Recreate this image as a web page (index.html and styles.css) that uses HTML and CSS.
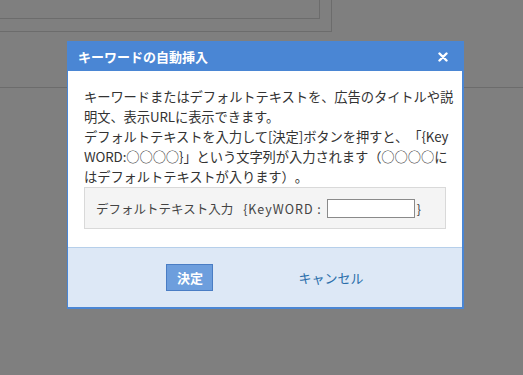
FILE: index.html
```html
<!DOCTYPE html>
<html lang="ja">
<head>
    <meta charset="UTF-8">
    <title>キーワードの自動挿入</title>
    <link rel="stylesheet" href="styles.css">
</head>
<body>
    <div class="page">
        <div class="panel">
            <div class="panel-inner"></div>
        </div>
        <div class="rule"></div>
    </div>

    <!-- モーダル -->
    <div class="dialog">
        <div class="dialog-head">
            <span class="dialog-title">キーワードの自動挿入</span>
            <svg class="dialog-close" width="10" height="10" viewBox="0 0 10 10">
                <path d="M1.5 1.5 L8.5 8.5 M8.5 1.5 L1.5 8.5" stroke="#fff" stroke-width="2.4" stroke-linecap="round"/>
            </svg>
        </div>
        <div class="dialog-body">
            <p class="dialog-text">キーワードまたはデフォルトテキストを、広告のタイトルや説<br>明文、表示URLに表示できます。<br>デフォルトテキストを入力して[決定]ボタンを押すと、「{Key<br>WORD:○○○○}」という文字列が入力されます（○○○○に<br>はデフォルトテキストが入ります）。</p>
            <div class="keyword-box">
                <span class="keyword-label">デフォルトテキスト入力</span>
                <span class="keyword-open">{KeyWORD :</span>
                <input type="text" class="keyword-input">
                <span class="keyword-close">}</span>
            </div>
        </div>
        <div class="dialog-foot">
            <a href="#" class="btn-ok">決定</a>
            <a href="#" class="btn-cancel">キャンセル</a>
        </div>
    </div>
</body>
</html>
```

FILE: styles.css
```css
* {
    margin: 0;
    padding: 0;
    box-sizing: border-box;
}

:root {
    --blue: #4a86d4;
    --overlay: #7f7f7f;
    --line: #6c6c6c;
    --text: #333333;
}

body {
    background: var(--overlay);
    font-family: "Noto Sans CJK JP", "Liberation Sans", sans-serif;
    color: var(--text);
    width: 523px;
    height: 375px;
    overflow: hidden;
    position: relative;
    text-spacing-trim: space-all;
}

/* 背景 */
.panel {
    width: 332px;
    height: 32px;
    border-right: 1px solid var(--line);
    border-bottom: 1px solid var(--line);
}

.panel-inner {
    width: 320px;
    height: 19px;
    border-right: 1px solid var(--line);
    border-bottom: 1px solid var(--line);
}

.rule {
    height: 56px;
    border-bottom: 1px solid var(--line);
}

/* ダイアログ */
.dialog {
    position: absolute;
    left: 67px;
    top: 41px;
    width: 397px;
    background: #fff;
    border: 1px solid var(--blue);
    border-right-width: 2px;
    border-bottom-width: 2px;
    border-top: none;
}

.dialog-head {
    height: 30px;
    margin: 0 -2px 0 -1px;
    background: var(--blue);
    display: flex;
    align-items: center;
    justify-content: space-between;
    padding: 0 16px 0 11px;
    color: #fff;
}

.dialog-title {
    font-size: 13px;
    font-weight: bold;
}

.dialog-close {
    display: block;
    margin-top: 2px;
}

.dialog-body {
    padding: 16px 16px 18px;
}

.dialog-text {
    font-size: 13.3px;
    line-height: 20px;
    white-space: nowrap;
    letter-spacing: -0.1px;
}

.keyword-box {
    height: 42px;
    background: #f4f4f4;
    border: 1px solid #d9d9d9;
    display: flex;
    align-items: center;
    padding: 0 11px;
    font-size: 12.5px;
    color: #444;
}

.keyword-open {
    margin-left: 10px;
    margin-right: 5px;
    letter-spacing: 1px;
}

.keyword-input {
    width: 88px;
    height: 19px;
    border: 1px solid #8a8a8a;
    background: #fff;
}

.keyword-close {
    margin-left: 2px;
}

.dialog-foot {
    height: 60px;
    background: #dde8f6;
    border-top: 1px solid #b6cfea;
    display: flex;
    align-items: center;
    justify-content: center;
    gap: 85px;
}

.btn-ok {
    width: 47px;
    height: 27px;
    display: flex;
    align-items: center;
    justify-content: center;
    background: #6d9edd;
    border: 1px solid #4a7dc4;
    color: #fff;
    font-size: 13px;
    font-weight: bold;
    text-decoration: none;
}

.btn-cancel {
    color: #2a6eaa;
    font-size: 13px;
    text-decoration: none;
}
```
